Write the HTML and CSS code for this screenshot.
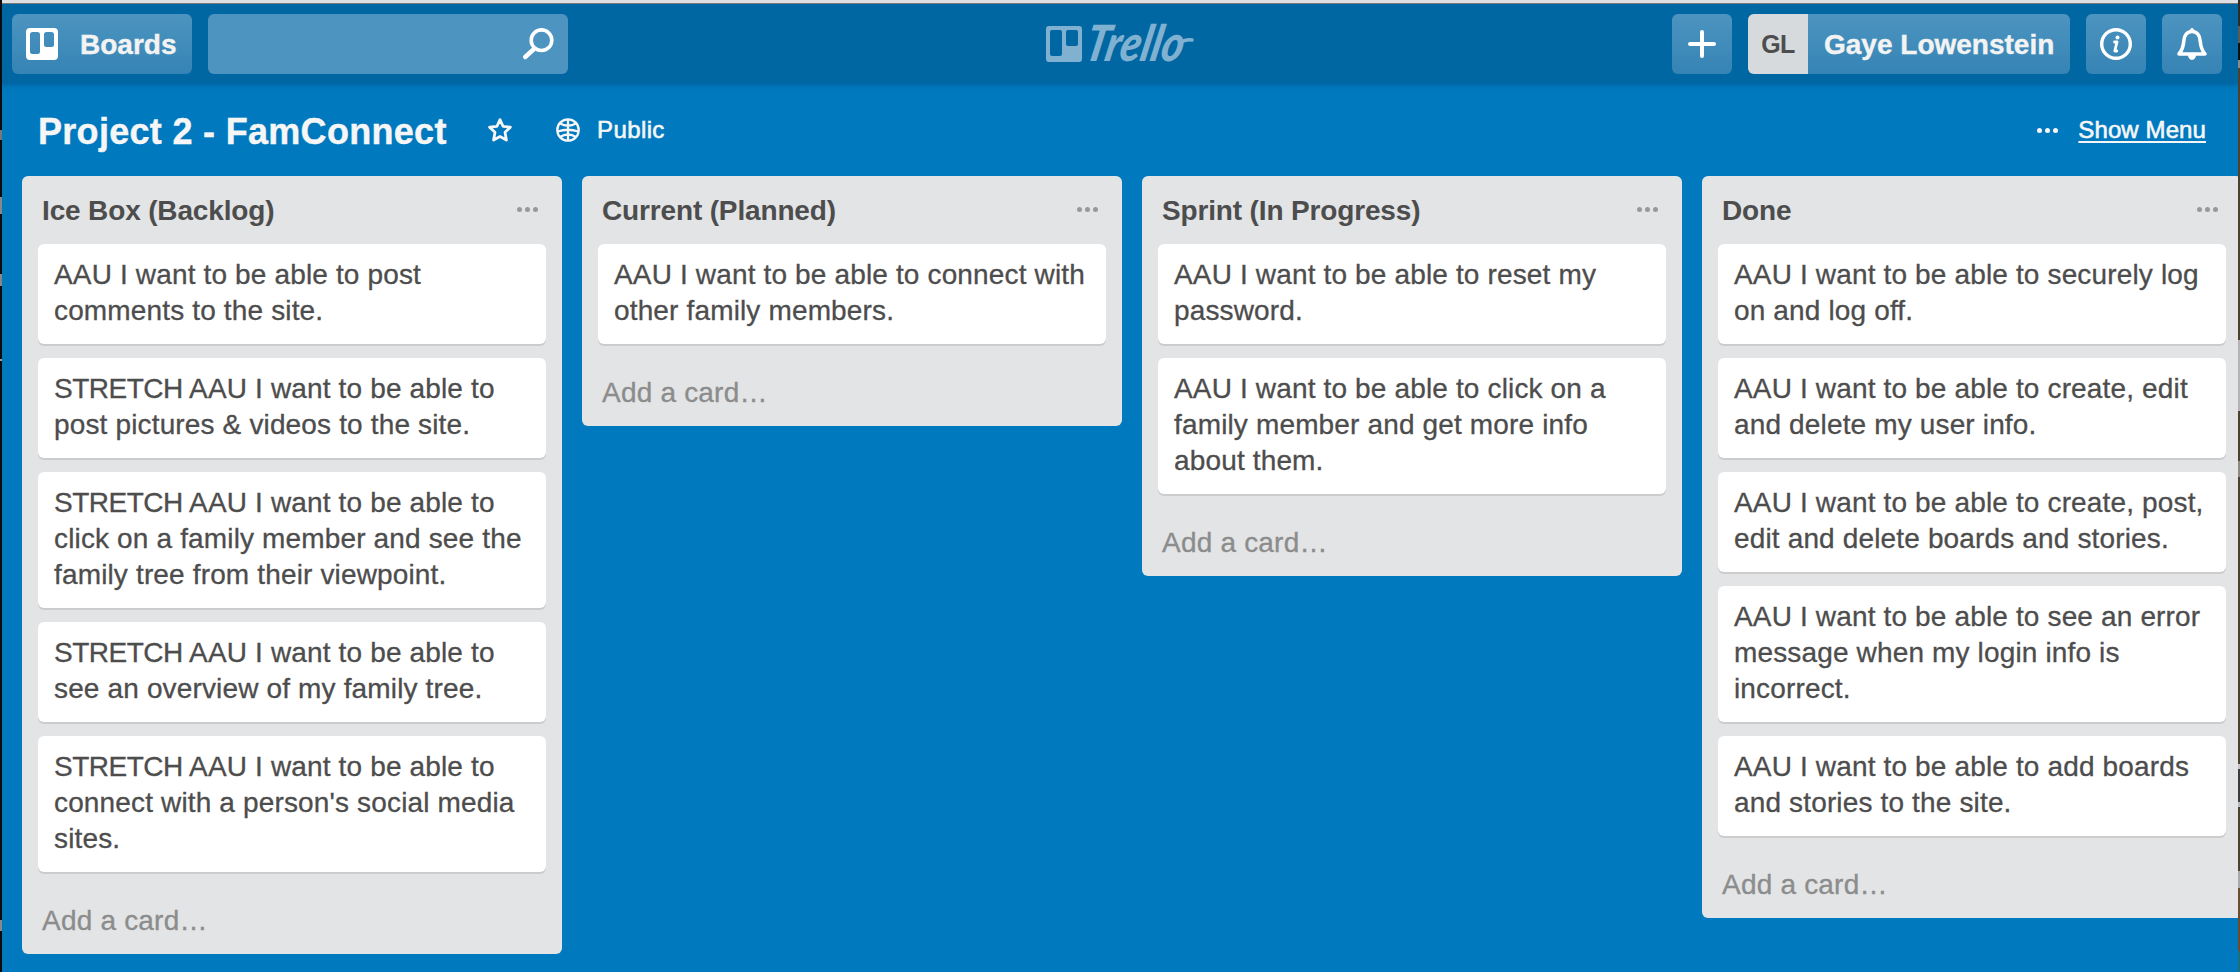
FILE: index.html
```html
<!DOCTYPE html>
<html lang="en">
<head>
<meta charset="utf-8">
<title>Project 2 - FamConnect | Trello</title>
<link rel="stylesheet" href="styles.css">
</head>
<body>
<div class="window">
  <header class="topbar">
    <div class="group left">
      <a class="btn boards">
        <svg width="32" height="32" viewBox="0 0 32 32"><path fill="#fff" fill-rule="evenodd" d="M4 0h24a4 4 0 0 1 4 4v24a4 4 0 0 1-4 4H4a4 4 0 0 1-4-4V4a4 4 0 0 1 4-4zM6.500 4A2.500 2.500 0 0 0 4 6.500v17A2.500 2.500 0 0 0 6.500 26h5a2.500 2.500 0 0 0 2.500-2.500v-17A2.500 2.500 0 0 0 11.500 4zM20.500 4A2.500 2.500 0 0 0 18 6.500v10a2.500 2.500 0 0 0 2.500 2.500h5a2.500 2.500 0 0 0 2.500-2.500v-10A2.500 2.500 0 0 0 25.500 4z"/></svg>
        <span class="boards-label">Boards</span>
      </a>
      <div class="search">
        <svg width="32" height="32" viewBox="0 0 32 32" fill="none" stroke="#fff" stroke-linecap="round"><circle cx="19.500" cy="12.200" r="10.300" stroke-width="3.600"/><path d="M12 21L3.200 29" stroke-width="4.400"/></svg>
      </div>
    </div>
    <div class="logo">
      <svg width="148" height="48" viewBox="0 0 148 48"><path fill="#80b1d1" fill-rule="evenodd" d="M3 8h30a3 3 0 0 1 3 3v30a3 3 0 0 1-3 3H3a3 3 0 0 1-3-3V11a3 3 0 0 1 3-3zM6 12a2 2 0 0 0-2 2v22a2 2 0 0 0 2 2h8a2 2 0 0 0 2-2V14a2 2 0 0 0-2-2zM22 12a2 2 0 0 0-2 2v12a2 2 0 0 0 2 2h8a2 2 0 0 0 2-2V14a2 2 0 0 0-2-2z"/><text class="wordmark" x="0" y="0" textLength="98" lengthAdjust="spacingAndGlyphs" transform="translate(37 43) skewX(-12)">Trello</text><path d="M134 25q5-4 12-3" fill="none" stroke="#80b1d1" stroke-width="3.500" stroke-linecap="round"/></svg>
    </div>
    <div class="group right">
      <a class="btn square"><svg width="28" height="28" viewBox="0 0 28 28" stroke="#fff" stroke-width="4" stroke-linecap="round"><path d="M14 2v24M2 14h24"/></svg></a>
      <a class="btn member"><span class="avatar">GL</span><span class="name">Gaye Lowenstein</span></a>
      <a class="btn square"><svg width="32" height="32" viewBox="0 0 32 32" fill="none" stroke="#fff"><circle cx="16" cy="16" r="14.300" stroke-width="3.400"/><path d="M14.500 14h2.500l-2.200 9h2" stroke-width="2.800" stroke-linecap="round" stroke-linejoin="round"/><circle cx="17.500" cy="9.500" r="2" fill="#fff" stroke="none"/></svg></a>
      <a class="btn square"><svg width="32" height="32" viewBox="0 0 32 32" fill="none" stroke="#fff" stroke-linejoin="round"><path stroke-width="3.600" d="M3 26C6.500 22 7.400 18 7.800 13 8.200 7 11.500 3.500 16 3.500S23.800 7 24.200 13C24.600 18 25.500 22 29 26z"/><path d="M12 27h8a4 5 0 0 1-8 0zM14 3a2 3 0 0 1 4 0z" fill="#fff" stroke="none"/></svg></a>
    </div>
  </header>
  <div class="boardbar">
    <h1 class="title">Project 2 - FamConnect</h1>
    <svg class="star" width="24" height="24" viewBox="0 0 24 24" fill="none" stroke="#f6f6f6" stroke-width="2.800" stroke-linejoin="round"><path d="M12 1.600l3 6.700 7.400.9-5.400 5 1.400 7.900-6.400-3.500-6.400 3.500L7 14.200l-5.400-5 7.400-.9z"/></svg>
    <svg class="globe" width="24" height="24" viewBox="0 0 24 24" fill="none" stroke="#f6f6f6" stroke-width="2.300"><circle cx="12" cy="12" r="10.700"/><path d="M12 1v22M4 5.500q8 4.500 16 0M1.500 13.500q10.500-3.500 21 0M4 19q8-5 16 0"/></svg>
    <span class="public">Public</span>
    <span class="menu"><i class="dots white"><b></b><b></b><b></b></i><a class="show">Show Menu</a></span>
  </div>
  <main class="lists">
    <section class="list">
      <h2 class="list-head"><span>Ice Box (Backlog)</span><i class="dots"><b></b><b></b><b></b></i></h2>
      <p class="card">AAU I want to be able to post<br>comments to the site.</p>
      <p class="card"><span class="caps">STRETCH</span> AAU I want to be able to<br>post pictures &amp; videos to the site.</p>
      <p class="card"><span class="caps">STRETCH</span> AAU I want to be able to<br>click on a family member and see the<br>family tree from their viewpoint.</p>
      <p class="card"><span class="caps">STRETCH</span> AAU I want to be able to<br>see an overview of my family tree.</p>
      <p class="card"><span class="caps">STRETCH</span> AAU I want to be able to<br>connect with a person's social media<br>sites.</p>
      <a class="add">Add a card…</a>
    </section>
    <section class="list">
      <h2 class="list-head"><span>Current (Planned)</span><i class="dots"><b></b><b></b><b></b></i></h2>
      <p class="card">AAU I want to be able to connect with<br>other family members.</p>
      <a class="add">Add a card…</a>
    </section>
    <section class="list">
      <h2 class="list-head"><span>Sprint (In Progress)</span><i class="dots"><b></b><b></b><b></b></i></h2>
      <p class="card">AAU I want to be able to reset my<br>password.</p>
      <p class="card">AAU I want to be able to click on a<br>family member and get more info<br>about them.</p>
      <a class="add">Add a card…</a>
    </section>
    <section class="list">
      <h2 class="list-head"><span>Done</span><i class="dots"><b></b><b></b><b></b></i></h2>
      <p class="card">AAU I want to be able to securely log<br>on and log off.</p>
      <p class="card">AAU I want to be able to create, edit<br>and delete my user info.</p>
      <p class="card">AAU I want to be able to create, post,<br>edit and delete boards and stories.</p>
      <p class="card">AAU I want to be able to see an error<br>message when my login info is<br>incorrect.</p>
      <p class="card">AAU I want to be able to add boards<br>and stories to the site.</p>
      <a class="add">Add a card…</a>
    </section>
  </main>
</div>
</body>
</html>
```
FILE: styles.css
```css
* { box-sizing: border-box; margin: 0; padding: 0; }
html, body { width: 2240px; height: 972px; overflow: hidden; }
body {
  padding: 0 2px;
  /* desktop visible beside the window: dark on the left, brown with lighter items on the right */
  background:
    linear-gradient(#2c2c28 0 26px, #5d5a55 26px 43px, #101010 43px 60px, #8c8a86 60px 68px, #4d4230 68px 340px, #b4b4b2 340px 411px, #4d4230 411px 461px, #8d8a84 461px 477px, #4d4230 477px 764px, #c4c4c4 764px 769px, #3c3c3c 769px 802px, #b8b8b8 802px 807px, #4d4230 807px 871px, #a9a9a7 871px 888px, #6b4c2c 888px 951px, #1f6f7a 951px) right / 2px 100% no-repeat,
    linear-gradient(#0c0c0c 0 130px, #777 130px 140px, #0c0c0c 140px 197px, #888 197px 214px, #0c0c0c 214px 274px, #888 274px 286px, #0c0c0c 286px 359px, #999 359px 361px, #0c0c0c 361px 920px, #888 920px 931px, #0c0c0c 931px) left / 2px 100% no-repeat;
  font-family: "Liberation Sans", Arial, sans-serif;
  font-size: 28px;
  line-height: 36px;
  color: #4d4d4d;
  white-space: nowrap;
}
svg { display: block; flex: none; overflow: visible; }
.window { width: 2236px; height: 972px; background: #0079bf; border-top: 3px solid #e0e0e2; overflow: hidden; }
.topbar {
  display: grid;
  grid-template-columns: 1fr 148px 1fr;
  height: 81px;
  padding: 10px 16px 10px 10px;
  border-top: 1px solid #77797c;
  background: #0067a3;
  box-shadow: 0 0 6px rgba(0, 70, 120, .6);
}
.group { display: flex; gap: 16px; height: 60px; }
.right { justify-content: flex-end; }
.btn {
  display: flex;
  align-items: center;
  height: 60px;
  border-radius: 6px;
  background: linear-gradient(#4d94c0, #3584b5);
  color: #f3f3f3;
  font-weight: 700;
  -webkit-text-stroke: .4px #f3f3f3;
  overflow: hidden;
}
.boards { width: 180px; padding-left: 14px; }
.boards-label { margin-left: 22px; padding-top: 1px; }
.search { display: flex; align-items: center; justify-content: flex-end; width: 360px; height: 60px; padding-right: 14px; border-radius: 6px; background: #4d94c0; }
.logo { height: 48px; margin: 4px 0 0 3px; }
.wordmark { font: italic 900 50px Lato, sans-serif; fill: #80b1d1; }
.square { width: 60px; justify-content: center; }
.member { width: 322px; }
.avatar { width: 60px; height: 60px; line-height: 60px; background: #d6dadc; color: #4d4d4d; font-size: 25px; letter-spacing: -.5px; text-align: center; -webkit-text-stroke: 0; }
.name { margin-left: 16px; padding-top: 1px; }
.boardbar { display: flex; align-items: center; height: 92px; padding: 0 32px 0 36px; color: #f6f6f6; }
.title { width: 450px; padding-top: 3px; font-size: 36px; line-height: 44px; letter-spacing: .3px; -webkit-text-stroke: .4px #f6f6f6; }
.globe { margin-left: 44px; }
.public { margin-left: 17px; font-size: 24px; letter-spacing: .4px; -webkit-text-stroke: .6px #f6f6f6; }
.menu { display: flex; align-items: center; margin-left: auto; font-size: 24px; letter-spacing: .1px; -webkit-text-stroke: .6px #f6f6f6; }
.show { margin-left: 20px; text-decoration: underline; text-decoration-thickness: 2px; text-underline-offset: 3px; }
.dots { display: flex; gap: 3px; }
.dots b { width: 5px; height: 5px; border-radius: 50%; background: #999; }
.dots.white b { background: #f6f6f6; }
.lists { display: flex; align-items: flex-start; gap: 20px; padding-left: 20px; }
.list { flex: none; width: 540px; padding: 0 16px 16px; border-radius: 6px; background: #e2e4e6; }
.list-head { display: flex; align-items: center; justify-content: space-between; height: 68px; padding: 0 8px 1px 4px; font-size: 28px; letter-spacing: -.15px; }
.list-head span { padding-top: 2px; }
.card { margin-bottom: 14px; padding: 13px 16px 15px; border-radius: 6px; background: #fff; box-shadow: 0 2px 0 #ccc; letter-spacing: .15px; -webkit-text-stroke: .3px #4d4d4d; }
.caps { letter-spacing: -.5px; }
.add { display: block; height: 52px; padding: 17px 4px 0; color: #8c8c8c; letter-spacing: .2px; -webkit-text-stroke: .3px #8c8c8c; }
```
